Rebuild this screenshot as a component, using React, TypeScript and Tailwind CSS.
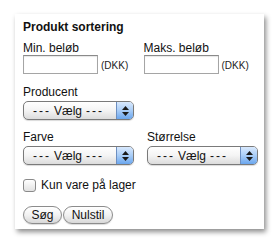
import React from 'react';

const font = { fontFamily: '"Liberation Sans", Arial, sans-serif' };

function Select({ width }: { width: string }) {
  return (
    <div
      className={`flex h-[19px] ${width} overflow-hidden rounded-[5px] border border-[#7a7a7a] bg-gradient-to-b from-white via-[#f4f4f4] to-[#dcdcdc] shadow-[0_1px_1px_rgba(0,0,0,0.15)]`}
    >
      <div className="flex flex-1 items-center pl-[9px] text-[12px] leading-none text-[#111]">
        <span className="tracking-[2px]">---</span>
        <span className="ml-[3px] mr-[4px]">Vælg</span>
        <span className="tracking-[2px]">---</span>
      </div>
      <div className="flex w-[17px] flex-col items-center justify-center gap-[2px] border-l border-[#6d8fc0] bg-gradient-to-b from-[#d9e9fd] via-[#a9cdf7] to-[#6aa6ee]">
        <svg width="7" height="4" viewBox="0 0 7 4">
          <path d="M3.5 0 L7 4 L0 4 Z" fill="#1a1a1a" />
        </svg>
        <svg width="7" height="4" viewBox="0 0 7 4">
          <path d="M0 0 L7 0 L3.5 4 Z" fill="#1a1a1a" />
        </svg>
      </div>
    </div>
  );
}

function Field({ label }: { label: string }) {
  return (
    <div className="flex w-[124px] flex-col">
      <span className="text-[12px] leading-[14px] text-[#111]">{label}</span>
      <div className="flex items-center">
        <div className="h-[19px] w-[75px] border border-[#a5a5a5] border-t-[#8a8a8a] bg-white shadow-[inset_0_1px_1px_rgba(0,0,0,0.1)]" />
        <span className="ml-[3px] mt-[2px] text-[10px] text-[#222]">(DKK)</span>
      </div>
    </div>
  );
}

function Button({ children, width }: { children: React.ReactNode; width: string }) {
  return (
    <button
      className={`flex h-[18px] ${width} items-center justify-center rounded-full border border-[#8c8c8c] bg-gradient-to-b from-white via-[#f2f2f2] to-[#d8d8d8] text-[12px] leading-none text-[#111] shadow-[0_1px_1px_rgba(0,0,0,0.15)]`}
    >
      {children}
    </button>
  );
}

export default function App() {
  return (
    <div className="h-[244px] w-[279px] bg-white pl-[15px] pt-[14px]" style={font}>
      <div className="flex h-[215px] w-[249px] flex-col bg-white pl-[8px] pt-[5px] shadow-[2px_3px_5px_rgba(0,0,0,0.45)]">
        <h2 className="text-[12px] font-bold leading-[16px] text-[#111]">Produkt sortering</h2>

        <div className="mt-[6px] flex">
          <Field label="Min. beløb" />
          <Field label="Maks. beløb" />
        </div>

        <span className="mt-[11px] text-[12px] leading-[14px] text-[#111]">Producent</span>
        <div className="mt-[2px]">
          <Select width="w-[111px]" />
        </div>

        <div className="mt-[10px] flex gap-[13px]">
          <div className="flex flex-col">
            <span className="text-[12px] leading-[14px] text-[#111]">Farve</span>
            <div className="mt-[2px]">
              <Select width="w-[111px]" />
            </div>
          </div>
          <div className="flex flex-col">
            <span className="text-[12px] leading-[14px] text-[#111]">Størrelse</span>
            <div className="mt-[2px]">
              <Select width="w-[111px]" />
            </div>
          </div>
        </div>

        <label className="mt-[13px] flex items-center gap-[5px]">
          <span className="h-[13px] w-[13px] rounded-[3px] border border-[#8a8a8a] bg-gradient-to-b from-white to-[#e2e2e2]" />
          <span className="text-[12px] leading-[14px] text-[#111]">Kun vare på lager</span>
        </label>

        <div className="mt-[14px] flex gap-[1px]">
          <Button width="w-[39px]">Søg</Button>
          <Button width="w-[50px]">Nulstil</Button>
        </div>
      </div>
    </div>
  );
}
